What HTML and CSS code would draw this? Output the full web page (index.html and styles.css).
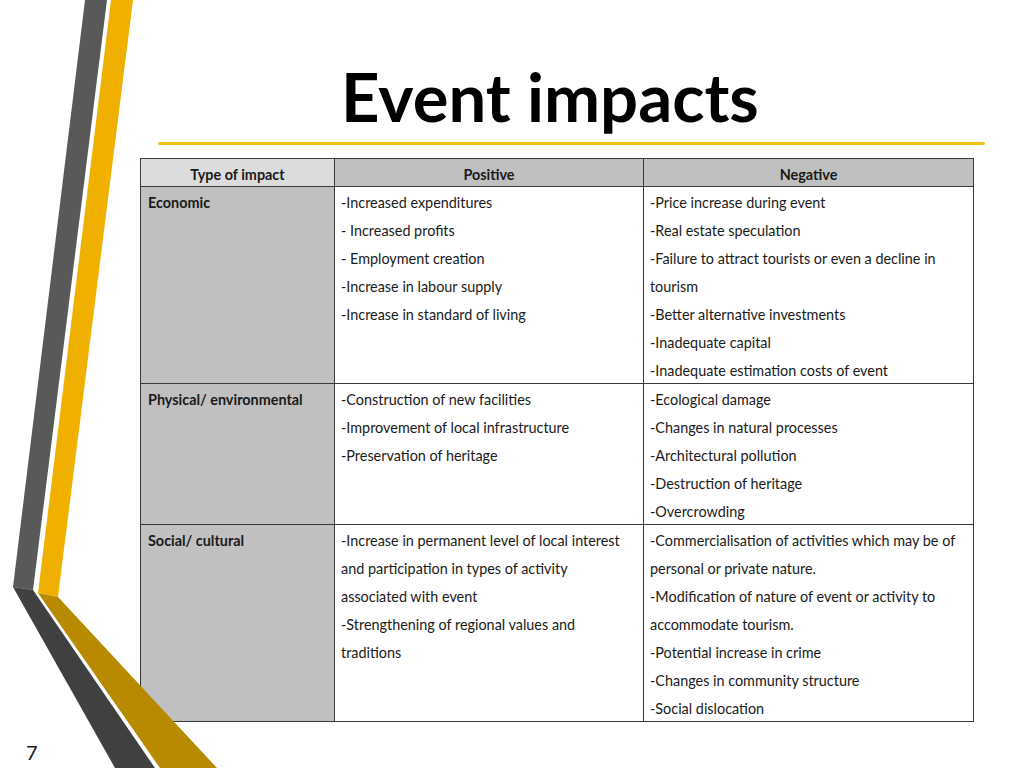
FILE: index.html
```html
<!DOCTYPE html>
<html lang="en">
<head>
<meta charset="utf-8">
<title>Event impacts</title>
<link rel="stylesheet" href="styles.css">
</head>
<body>
<div class="slide">
  <svg class="deco" width="240" height="768" viewBox="0 0 240 768" aria-hidden="true">
    <polygon points="85,0 107,0 33,590 13,587" fill="#595959"/>
    <polygon points="13,587 33,590 155,768 115,768" fill="#404040"/>
    <polygon points="111,0 133,0 58,597 38,593" fill="#f0b000"/>
    <polygon points="38,593 58,597 217,768 160,768" fill="#b88a00"/>
  </svg>
  <div class="content">
    <h1 class="title">Event impacts</h1>
    <div class="rule"></div>
    <table class="impacts">
      <colgroup>
        <col class="c1"><col class="c2"><col class="c3">
      </colgroup>
      <thead>
        <tr>
          <th class="h-type">Type of impact</th>
          <th>Positive</th>
          <th>Negative</th>
        </tr>
      </thead>
      <tbody>
        <tr>
          <td class="type">Economic</td>
          <td>
            <div class="ln">-Increased expenditures</div>
            <div class="ln">- Increased profits</div>
            <div class="ln">- Employment creation</div>
            <div class="ln">-Increase in labour supply</div>
            <div class="ln">-Increase in standard of living</div>
          </td>
          <td>
            <div class="ln">-Price increase during event</div>
            <div class="ln">-Real estate speculation</div>
            <div class="ln">-Failure to attract tourists or even a decline in</div>
            <div class="ln">tourism</div>
            <div class="ln">-Better alternative investments</div>
            <div class="ln">-Inadequate capital</div>
            <div class="ln">-Inadequate estimation costs of event</div>
          </td>
        </tr>
        <tr>
          <td class="type">Physical/ environmental</td>
          <td>
            <div class="ln">-Construction of new facilities</div>
            <div class="ln">-Improvement of local infrastructure</div>
            <div class="ln">-Preservation of heritage</div>
          </td>
          <td>
            <div class="ln">-Ecological damage</div>
            <div class="ln">-Changes in natural processes</div>
            <div class="ln">-Architectural pollution</div>
            <div class="ln">-Destruction of heritage</div>
            <div class="ln">-Overcrowding</div>
          </td>
        </tr>
        <tr>
          <td class="type">Social/ cultural</td>
          <td>
            <div class="ln">-Increase in permanent level of local interest</div>
            <div class="ln">and participation in types of activity</div>
            <div class="ln">associated with event</div>
            <div class="ln">-Strengthening of regional values and</div>
            <div class="ln">traditions</div>
          </td>
          <td>
            <div class="ln">-Commercialisation of activities which may be of</div>
            <div class="ln">personal or private nature.</div>
            <div class="ln">-Modification of nature of event or activity to</div>
            <div class="ln">accommodate tourism.</div>
            <div class="ln">-Potential increase in crime</div>
            <div class="ln">-Changes in community structure</div>
            <div class="ln">-Social dislocation</div>
          </td>
        </tr>
      </tbody>
    </table>
  </div>
  <div class="page-num">7</div>
</div>
</body>
</html>
```

FILE: styles.css
```css
html, body {
  margin: 0;
  padding: 0;
  background: #ffffff;
}

.slide {
  position: relative;
  width: 1024px;
  height: 768px;
  overflow: hidden;
  font-family: Lato, "Open Sans", "Liberation Sans", sans-serif;
  color: #1a1a1a;
}

.deco {
  position: absolute;
  left: 0;
  top: 0;
}

.content {
  display: flex;
  flex-direction: column;
  padding-left: 140px;
}

.title {
  margin: 0;
  height: 142px;
  box-sizing: border-box;
  padding-top: 63px;
  padding-left: 201px;
  font-size: 67px;
  line-height: 67px;
  font-weight: 700;
  color: #000000;
  white-space: nowrap;
}

.rule {
  margin-left: 18px;
  width: 827px;
  height: 3px;
  background: #f2c314;
  border-radius: 2px;
}

.impacts {
  margin-top: 13px;
  width: 833px;
  border-collapse: collapse;
  table-layout: fixed;
  font-size: 14.4px;
  color: #1a1a1a;
}

.c1 { width: 194px; }
.c2 { width: 309px; }
.c3 { width: 330px; }

.impacts th,
.impacts td {
  border: 1.5px solid #3a3a3a;
  padding: 2px 6px 0;
  vertical-align: top;
  line-height: 28px;
  text-align: left;
}

.impacts th {
  line-height: 22px;
  padding-top: 5px;
  padding-bottom: 0;
  text-align: center;
  font-weight: 700;
  background: #c0c0c0;
}

.impacts th.h-type {
  background: #dcdcdc;
}

.impacts td.type {
  background: #c0c0c0;
  font-weight: 700;
  padding-left: 7px;
}

.ln {
  white-space: nowrap;
}

.ln:last-child {
  margin-bottom: -2px;
}

.page-num {
  position: absolute;
  left: 26px;
  top: 740px;
  font-size: 20px;
  color: #1a1a1a;
}
```
